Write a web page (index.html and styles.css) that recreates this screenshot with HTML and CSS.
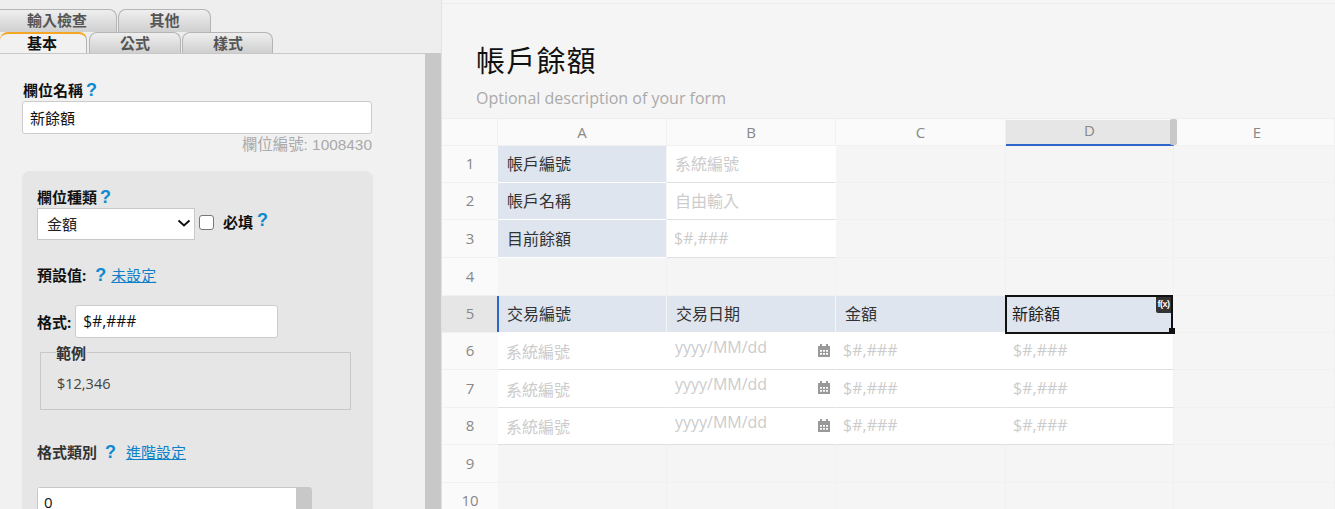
FILE: index.html
```html
<!DOCTYPE html>
<html lang="zh-Hant">
<head>
<meta charset="utf-8">
<title>帳戶餘額</title>
<link rel="stylesheet" href="styles.css">
</head>
<body>
<div class="app">
  <aside class="side">
    <div class="tabs">
      <div class="tab-row">
        <div class="tab tab-a">輸入檢查</div>
        <div class="tab tab-b">其他</div>
      </div>
      <div class="tab-row">
        <div class="tab tab-active">基本</div>
        <div class="tab tab-c">公式</div>
        <div class="tab tab-d">樣式</div>
      </div>
    </div>
    <div class="side-body">
      <div class="side-content">
        <div class="label">欄位名稱 <span class="q">?</span></div>
        <div class="text-input name-input">新餘額</div>
        <div class="field-id">欄位編號: 1008430</div>
        <div class="card">
          <div class="label">欄位種類 <span class="q">?</span></div>
          <div class="type-row">
            <div class="select">金額
              <svg class="chev" width="14" height="8" viewBox="0 0 14 8"><path d="M1.500 1.500 7 6.500l5.500-5" fill="none" stroke="#111" stroke-width="2"/></svg>
            </div>
            <div class="check"></div>
            <span class="label req">必填</span>
            <span class="q q-up">?</span>
          </div>
          <div class="label default-row">預設值: <span class="q q-gap">?</span><a class="link">未設定</a></div>
          <div class="format-row">
            <span class="label">格式:</span>
            <div class="text-input fmt-input">$#,###</div>
          </div>
          <div class="example">
            <span class="legend">範例</span>
            <div class="example-val">$12,346</div>
          </div>
          <div class="label cat-row">格式類別 <span class="q q-gap2">?</span><a class="link">進階設定</a></div>
          <div class="list-box"><div class="list-main">0</div><div class="list-bar"></div></div>
        </div>
      </div>
      <div class="side-scroll"></div>
    </div>
  </aside>
  <main class="main">
    <div class="top-line"></div>
    <h1 class="title">帳戶餘額</h1>
    <div class="desc">Optional description of your form</div>
    <div class="sheet">
      <div class="hd corner"></div><div class="hd">A</div><div class="hd">B</div><div class="hd">C</div><div class="hd hd-sel">D<span class="col-grip"></span></div><div class="hd hd-e">E</div>

      <div class="rn">1</div><div class="c lab">帳戶編號</div><div class="c w ph">系統編號</div><div class="c"></div><div class="c"></div><div class="c"></div>
      <div class="rn">2</div><div class="c lab">帳戶名稱</div><div class="c w ph">自由輸入</div><div class="c"></div><div class="c"></div><div class="c"></div>
      <div class="rn">3</div><div class="c lab">目前餘額</div><div class="c w ph latin">$#,###</div><div class="c"></div><div class="c"></div><div class="c"></div>
      <div class="rn">4</div><div class="c"></div><div class="c"></div><div class="c"></div><div class="c"></div><div class="c"></div>
      <div class="rn rn-sel">5<span class="row-mark"></span></div><div class="c lab">交易編號</div><div class="c lab">交易日期</div><div class="c lab">金額</div>
      <div class="c lab sel-cell">新餘額
        <div class="sel-box"><span class="fx">f(x)</span><span class="handle"></span></div>
      </div>
      <div class="c"></div>

      <div class="rn">6</div><div class="c w ph sys">系統編號</div><div class="c w ph date">yyyy/MM/dd<svg class="cal" width="12" height="13" viewBox="0 0 12 13"><path fill="#999" fill-rule="evenodd" d="M2 0h2v2h4V0h2v2h2v11H0V2h2zM2 6v1.800h2V6zm3 0v1.800h2V6zm3 0v1.800h2V6zM2 9v1.800h2V9zm3 0v1.800h2V9zm3 0v1.800h2V9z"/></svg></div><div class="c w ph latin">$#,###</div><div class="c w ph latin last-w">$#,###</div><div class="c"></div>
      <div class="rn">7</div><div class="c w ph sys">系統編號</div><div class="c w ph date">yyyy/MM/dd<svg class="cal" width="12" height="13" viewBox="0 0 12 13"><path fill="#999" fill-rule="evenodd" d="M2 0h2v2h4V0h2v2h2v11H0V2h2zM2 6v1.800h2V6zm3 0v1.800h2V6zm3 0v1.800h2V6zM2 9v1.800h2V9zm3 0v1.800h2V9zm3 0v1.800h2V9z"/></svg></div><div class="c w ph latin">$#,###</div><div class="c w ph latin last-w">$#,###</div><div class="c"></div>
      <div class="rn">8</div><div class="c w ph sys">系統編號</div><div class="c w ph date">yyyy/MM/dd<svg class="cal" width="12" height="13" viewBox="0 0 12 13"><path fill="#999" fill-rule="evenodd" d="M2 0h2v2h4V0h2v2h2v11H0V2h2zM2 6v1.800h2V6zm3 0v1.800h2V6zm3 0v1.800h2V6zM2 9v1.800h2V9zm3 0v1.800h2V9zm3 0v1.800h2V9z"/></svg></div><div class="c w ph latin">$#,###</div><div class="c w ph latin last-w">$#,###</div><div class="c"></div>
      <div class="rn">9</div><div class="c"></div><div class="c"></div><div class="c"></div><div class="c"></div><div class="c"></div>
      <div class="rn">10</div><div class="c"></div><div class="c"></div><div class="c"></div><div class="c"></div><div class="c"></div>
    </div>
  </main>
</div>
</body>
</html>
```

FILE: styles.css
```css
* { box-sizing: border-box; }
html, body { margin: 0; height: 509px; overflow: hidden; }
body { font-family: "Open Sans", "Noto Sans CJK TC", sans-serif; font-size: 15px; color: #111; background: #f5f5f5; }
.app { display: flex; height: 509px; overflow: hidden; }

/* side panel */
.side { width: 442px; flex: none; display: flex; flex-direction: column; background: #eee; border-right: 1px solid #e2e2e2; }
.tabs { padding-top: 9px; height: 53px; flex: none; }
.tab-row { display: flex; height: 23px; }
.tab-row + .tab-row { height: 21px; }
.tab { border: 1px solid #b4b4b4; border-bottom: 0; border-radius: 8px 8px 0 0; background: linear-gradient(#efefef, #cfcfcf); font-weight: 700; color: #555; display: flex; align-items: center; justify-content: center; font-size: 15px; margin-right: 1px; line-height: 1; }
.tab-a { width: 117px; border-left: 0; border-top-left-radius: 0; padding: 0 2px 2px 0; }
.tab-b { width: 93px; padding-bottom: 2px; }
.tab-active { width: 87px; margin-right: 2px; background: #f1f1f1; border: 0; border-top: 2px solid #f5a623; border-right: 1px solid #b4b4b4; color: #111; padding-right: 2px; }
.tab-c { width: 92px; }
.tab-d { width: 91px; padding-left: 1px; }
.side-body { flex: 1; display: flex; min-height: 0; background: #f1f1f1; border-top: 1px solid #c8c8c8; }
.side-content { width: 425px; flex: none; padding: 26px 0 0 22px; overflow: hidden; }
.side-scroll { width: 16px; background: #c8c8c8; }
.label { font-weight: 700; color: #111; font-size: 15px; line-height: 20px; white-space: nowrap; }
.q { color: #0e8ad0; font-weight: 700; font-size: 18px; line-height: 20px; font-family: "Liberation Sans", sans-serif; margin-left: -1px; }
.side-content > .label { padding-left: 1px; }
.text-input { background: #fff; border: 1px solid #ccc; border-radius: 3px; display: flex; align-items: center; padding-left: 7px; color: #111; }
.name-input { width: 350px; height: 33px; margin-top: 1px; font-size: 15px; }
.field-id { width: 350px; text-align: right; color: #aaa; font-size: 15.400px; line-height: 20px; margin-top: 1px; font-family: "Liberation Sans", "Noto Sans CJK TC", sans-serif; }
.card { width: 351px; height: 400px; margin-top: 16px; background: #e6e6e6; border-radius: 8px; padding: 16px 15px 0; }
.type-row { display: flex; align-items: center; height: 32px; margin-top: 1px; }
.select { width: 158px; height: 32px; background: #fff; border: 1px solid #c8c8c8; display: flex; align-items: center; justify-content: space-between; padding: 0 3px 2px 9px; font-size: 15px; color: #222; }
.check { width: 15px; height: 15px; margin: 0 9px 4px 4px; border: 1px solid #777; border-radius: 3px; background: #fff; }
.req { margin-bottom: 4px; }
.q-up { margin: -8px 0 0 4px; }
.default-row { margin-top: 25px; display: flex; align-items: center; }
.q-gap { margin: 0 5px 0 9px; }
.q-gap2 { margin: 0 10px 0 8px; }
.link { color: #0e80c8; font-weight: 400; text-decoration: underline; font-size: 15px; }
.format-row { display: flex; align-items: center; margin-top: 20px; height: 33px; gap: 4px; }
.fmt-input { width: 203px; height: 33px; font-size: 15.500px; padding: 0 0 2px 7px; }
.example { width: 311px; height: 58px; margin: 14px 0 0 3px; border: 1px solid #c8c8c8; position: relative; padding: 22px 0 0 16px; color: #444; line-height: 18px; }
.legend { position: absolute; left: 15px; top: -8px; font-weight: 700; background: #e6e6e6; line-height: 16px; padding-right: 1px; color: #333; }
.example-val { font-size: 14.500px; }
.cat-row { margin-top: 32px; display: flex; align-items: center; color: #333; }
.list-box { display: flex; width: 275px; height: 40px; margin-top: 25px; border: 1px solid #c8c8c8; border-radius: 3px 3px 0 0; }
.list-main { width: 258px; background: #fff; padding: 4px 0 0 6px; font-size: 15px; }
.list-bar { flex: 1; background: #c8c8c8; }

/* main */
.main { flex: 1; min-width: 0; background: #f5f5f5; display: flex; flex-direction: column; }
.top-line { height: 4px; border-bottom: 1px solid #eee; flex: none; }
.title { margin: 37px 0 0 34px; font-weight: 400; font-size: 29px; line-height: 40px; color: #111; letter-spacing: 1.200px; }
.desc { margin: 5px 0 0 33px; height: 23px; color: #aaa; font-size: 16px; line-height: 23px; border: 1px solid #f7f7f7; border-right: 0; }
.sheet { margin-top: 9px; border-top: 1px solid #eee; display: grid; grid-template-columns: 56px 169px 169px 170px 168px 1fr; grid-template-rows: 27px 37px 37px 38px 38px 37px 37px 38px 37px 38px 37px; font-size: 16px; }
.hd { background: #fafafa; color: #888; display: flex; align-items: center; justify-content: center; font-size: 15px; border-right: 1px solid #f1f1f1; border-bottom: 1px solid #f1f1f1; position: relative; }
.hd-e { padding-left: 6px; }
.hd-sel { background: #e6e6e6; border-bottom: 2px solid #2f66c9; border-top: 1px solid #fafafa; align-items: flex-start; padding-top: 0; z-index: 1; }
.col-grip { position: absolute; right: -4px; top: -1px; width: 7px; height: 26px; background: #c8c8c8; border-radius: 2px; }
.rn { background: #fafafa; color: #888; display: flex; align-items: center; justify-content: center; font-size: 15px; border-bottom: 1px solid #f1f1f1; position: relative; padding-bottom: 2px; }
.rn-sel { background: #e6e6e6; }
.row-mark { position: absolute; right: -1px; top: 0; width: 2px; bottom: 0; background: #2f66c9; }
.c { background: #f5f5f5; border-right: 1px solid #f1f1f1; border-bottom: 1px solid #f1f1f1; display: flex; align-items: center; padding: 0 8px 2px 9px; color: #333; white-space: nowrap; min-width: 0; }
.lab { background: #dfe5ee; border-right-color: #f5f5f5; border-bottom-color: #fff; }
.w { background: #fff; border-right-color: #fff; border-bottom-color: #e0e0e0; }
.ph { color: #ccc; padding-left: 8px; }
.sys { padding-bottom: 0; }
.latin { padding-left: 7px; }
.last-w { border-right-color: #f1f1f1; }
.date { justify-content: space-between; align-items: flex-start; padding: 3px 5px 0 8px; position: relative; }
.cal { margin-top: 8px; }
.sel-cell { position: relative; color: #222; padding-left: 6px; }
.sel-box { position: absolute; left: -1px; top: -1px; right: 0; bottom: -2px; border: 2px solid #111; pointer-events: none; }
.fx { position: absolute; right: 0; top: 0; width: 15px; height: 16px; background: #333; color: #fff; font-size: 9px; font-weight: 700; font-family: "Liberation Sans", sans-serif; line-height: 14px; text-align: center; letter-spacing: -0.500px; border-radius: 0 0 0 2px; }
.handle { position: absolute; right: -4px; bottom: -2px; width: 6px; height: 6px; background: #111; }
```
